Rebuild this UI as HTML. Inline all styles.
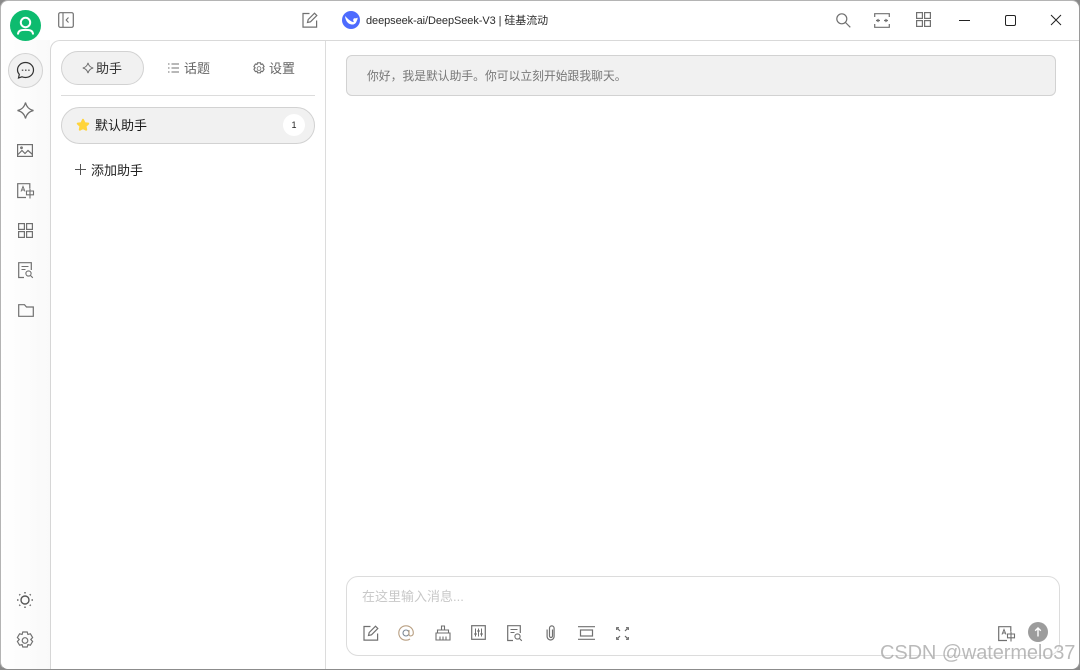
<!DOCTYPE html>
<html><head><meta charset="utf-8">
<style>
html,body{margin:0;padding:0;width:1080px;height:670px;overflow:hidden;background:#8a8a8a}
body{font-family:"Liberation Sans","Noto Sans CJK SC",sans-serif;color:#222}
.a{position:absolute}
#win{position:absolute;left:0;top:0;width:1078px;height:668px;background:linear-gradient(#fff,#fbfbfb);border:1px solid #b4b4b4;border-bottom-color:#8c8c8c;border-right-color:#9a9a9a;border-radius:8px;overflow:hidden}
#root{position:absolute;left:0;top:0;width:1080px;height:670px;overflow:hidden}
.t{position:absolute;white-space:nowrap;line-height:18px}
svg{position:absolute;overflow:visible;fill:none;stroke:#707070;stroke-width:1.2}
</style></head><body>
<div id="root">
<div id="win"></div>
<!-- left bar -->
<div class="a" style="left:1px;top:40px;width:49px;height:629px;background:linear-gradient(90deg,#fff,#f9f9f9);border-bottom-left-radius:8px"></div>
<!-- main panel -->
<div class="a" style="left:50px;top:40px;width:1029px;height:629px;background:#fff;border-left:1px solid #d6d6d6;border-top:1px solid #d9d9d9;border-top-left-radius:10px;box-sizing:border-box;border-bottom-right-radius:8px"></div>
<div class="a" style="left:325px;top:41px;width:1px;height:628px;background:#dcdcdc"></div>

<!-- avatar -->
<div class="a" style="left:10px;top:10px;width:31px;height:31px;border-radius:50%;background:#0dbb6f"></div>
<svg style="left:10px;top:10px" width="31" height="31" viewBox="0 0 31 31"><g stroke="#fff" stroke-width="2"><circle cx="15.500" cy="12.500" r="4.700"/><path d="M8 24.500c0-4 3-4.600 7.500-4.600s7.500.6 7.500 4.600"/></g></svg>

<!-- nav -->
<div class="a" style="left:8px;top:53px;border-radius:50%;background:#f1f1f1;border:1px solid #d2d2d2;box-sizing:border-box;width:35px;height:35px"></div>
<svg style="left:16px;top:61px" width="19" height="19" viewBox="0 0 19 19"><path stroke="#333" stroke-width="1.200" d="M9.500 1.500c4.500 0 8 3.200 8 7.500s-3.500 7.500-8 7.500c-1.300 0-2.500-.3-3.500-.7L2.500 17l.8-3.600C2.200 12.200 1.500 10.700 1.500 9c0-4.300 3.500-7.500 8-7.500z"/><path stroke="#333" stroke-dasharray="1.500 1.700" d="M5.800 9.200h7.800"/></svg>
<svg style="left:16px;top:101px" width="19" height="19" viewBox="0 0 19 19"><path d="M9.500 1.500C10.500 6 13 8.500 17.500 9.500 13 10.500 10.500 13 9.500 17.500 8.500 13 6 10.500 1.500 9.500 6 8.500 8.500 6 9.500 1.500z"/></svg>
<svg style="left:17px;top:144px" width="16" height="13" viewBox="0 0 16 13"><rect x=".6" y=".6" width="14.800" height="11.800"/><path d="M1 10.500l4-4 3 3 3-3 4.500 4"/><circle cx="4.500" cy="3.800" r=".8"/></svg>
<svg style="left:17px;top:183px" width="18" height="16" viewBox="0 0 18 16"><path d="M9 14.500H.7V.7h12.100v5"/><path d="M4 8.500l2-5 2 5M4.700 7h2.600" stroke-width="1"/><path d="M9.500 8h7v3.800h-7zM13 6v9.500" stroke-width="1.100"/></svg>
<svg style="left:18px;top:223px" width="15" height="15" viewBox="0 0 15 15"><rect x=".6" y=".6" width="5.800" height="5.800"/><rect x="8.600" y=".6" width="5.800" height="5.800"/><rect x=".6" y="8.600" width="5.800" height="5.800"/><rect x="8.600" y="8.600" width="5.800" height="5.800"/></svg>
<svg style="left:18px;top:262px" width="16" height="17" viewBox="0 0 16 17"><path d="M6 15.500H.7V.7h12.600V8"/><path d="M3.500 4.500h7M3.500 7.500h4" stroke-width="1"/><circle cx="10.500" cy="11.500" r="2.600" stroke-width="1.100"/><path d="M12.500 13.500l2.300 2.300" stroke-width="1.100"/></svg>
<svg style="left:18px;top:304px" width="16" height="13" viewBox="0 0 16 13"><path d="M.7 12.300V.7h5.800l2 2.300h6.800v9.300z"/></svg>
<svg style="left:16px;top:591px" width="18" height="18" viewBox="0 0 18 18"><circle cx="9" cy="9" r="4" stroke="#555" stroke-width="1.400"/><path stroke-width="1.500" stroke="#666" d="M9 1v1.500M9 15.500V17M1 9h1.500M15.500 9H17M3.300 3.300l.9.9M13.800 13.800l.9.9M3.300 14.700l.9-.9M13.800 4.200l.9-.9"/></svg>
<svg style="left:16px;top:631px" width="18" height="19" viewBox="0 0 18 19"><path d="M6.800 1h4.400l.7 2.400 2.500-.6 2.200 3.700-1.800 2 1.800 2-2.200 3.700-2.500-.6-.7 2.400H6.800l-.7-2.400-2.500.6-2.200-3.700 1.800-2-1.800-2 2.200-3.700 2.500.6z"/><circle cx="9" cy="9.500" r="2.800"/></svg>

<!-- header icons -->
<svg style="left:58px;top:12px" width="16" height="16" viewBox="0 0 16 16"><rect x=".7" y=".7" width="14.600" height="14.600" rx="1.500"/><path d="M5 1v14M10.500 5.500L8.200 8l2.300 2.500" stroke-width="1.100"/></svg>
<svg style="left:302px;top:12px" width="16" height="16" viewBox="0 0 16 16"><path d="M7.500 1.500H1v13.600h13.600V8.500"/><path d="M5.500 10.500l.7-3L12.500 1.200l2.300 2.300-6.300 6.300z" stroke-width="1.200"/></svg>
<div class="a" style="left:342px;top:11px;width:18px;height:18px;border-radius:50%;background:#4d6bfe"></div>
<svg style="left:342px;top:11px" width="18" height="18" viewBox="0 0 18 18"><path fill="#fff" stroke="none" d="M3 5c.4 4.500 2.700 8 6.500 8.500 2.600.3 4.300-1 5-3 .5-1.300 1.400-2.400 1-4-.7.600-1.400.9-2.200.8-1-.1-1.800.2-2 1-.3 1 0 2 .7 2.800-2 .1-5.200-2-9-6.100z"/></svg>
<div class="t" style="left:366px;top:12px;font-size:11px;letter-spacing:-.08px;color:#2b2b2b">deepseek-ai/DeepSeek-V3 | 硅基流动</div>
<svg style="left:836px;top:13px" width="15" height="15" viewBox="0 0 15 15"><circle cx="5.800" cy="5.800" r="5"/><path d="M9.500 9.500l4.800 4.800"/></svg>
<svg style="left:874px;top:13px" width="16" height="15" viewBox="0 0 16 15"><path d="M.7 4V.7h14.600V4M.7 11v3.300h14.600V11"/><path d="M2 7.500h4M10 7.500h4"/><path d="M4.500 6L3 7.500 4.500 9M11.500 6L13 7.500 11.500 9" stroke-width="1"/></svg>
<svg style="left:916px;top:12px" width="15" height="15" viewBox="0 0 15 15"><rect x=".6" y=".6" width="5.800" height="5.800"/><rect x="8.600" y=".6" width="5.800" height="5.800"/><rect x=".6" y="8.600" width="5.800" height="5.800"/><rect x="8.600" y="8.600" width="5.800" height="5.800"/></svg>
<div class="a" style="left:959px;top:20px;width:11px;height:1px;background:#222"></div>
<div class="a" style="left:1005px;top:15px;width:11px;height:11px;border:1px solid #222;border-radius:2px;box-sizing:border-box"></div>
<svg style="left:1051px;top:15px" width="10" height="10" viewBox="0 0 10 10"><path stroke="#222" stroke-width="1" d="M0 0l10 10M10 0L0 10"/></svg>

<!-- tabs -->
<div class="a" style="left:61px;top:51px;width:83px;height:34px;background:#f1f1f1;border:1px solid #d2d2d2;border-radius:17px;box-sizing:border-box"></div>
<svg style="left:82px;top:62px" width="12" height="12" viewBox="0 0 12 12"><path stroke-width="1" d="M6 .8C6.600 3.500 8.300 5.300 11.200 6 8.300 6.700 6.600 8.500 6 11.200 5.400 8.500 3.700 6.700.8 6 3.700 5.300 5.400 3.500 6 .8z"/></svg>
<div class="t" style="left:96px;top:60px;font-size:13px;color:#333">助手</div>
<svg style="left:168px;top:63px" width="11" height="10" viewBox="0 0 11 10"><path stroke-width="1" d="M0 1h1.500M3.500 1H11M0 5h1.500M3.500 5H11M0 9h1.500M3.500 9H11"/></svg>
<div class="t" style="left:184px;top:60px;font-size:13px;color:#666">话题</div>
<svg style="left:253px;top:62px" width="12" height="13" viewBox="0 0 18 19"><path stroke-width="1.700" d="M6.800 1h4.400l.7 2.400 2.500-.6 2.200 3.700-1.800 2 1.800 2-2.200 3.700-2.500-.6-.7 2.400H6.800l-.7-2.400-2.500.6-2.200-3.700 1.800-2-1.800-2 2.200-3.700 2.500.6z"/><circle cx="9" cy="9.500" r="2.800"/></svg>
<div class="t" style="left:269px;top:60px;font-size:13px;color:#666">设置</div>
<div class="a" style="left:61px;top:95px;width:254px;height:1px;background:#dcdcdc"></div>

<!-- assistant -->
<div class="a" style="left:61px;top:107px;width:254px;height:37px;background:#f1f1f1;border:1px solid #d2d2d2;border-radius:18.500px;box-sizing:border-box"></div>
<svg style="left:76px;top:118px" width="14" height="14" viewBox="0 0 14 14"><path fill="#ffd43b" stroke="#ffd43b" stroke-width="2" stroke-linejoin="round" d="M7 1.800l1.600 3.400 3.600.4-2.700 2.500.7 3.600L7 10l-3.200 1.700.7-3.600L1.800 5.600l3.600-.4z"/></svg>
<div class="t" style="left:95px;top:117px;font-size:13px;color:#1a1a1a">默认助手</div>
<div class="a" style="left:283px;top:114px;width:22px;height:22px;border-radius:50%;background:#fff;font-size:9px;line-height:22px;text-align:center;color:#222">1</div>
<svg style="left:75px;top:164px" width="11" height="11" viewBox="0 0 11 11"><path stroke="#555" stroke-width="1" d="M5.500 0v11M0 5.500h11"/></svg>
<div class="t" style="left:91px;top:162px;font-size:13px;color:#222">添加助手</div>

<!-- message -->
<div class="a" style="left:346px;top:55px;width:710px;height:41px;background:#f1f1f1;border:1px solid #d2d2d2;border-radius:6px;box-sizing:border-box"></div>
<div class="t" style="left:367px;top:67px;font-size:11.800px;color:#777">你好，我是默认助手。你可以立刻开始跟我聊天。</div>

<!-- input -->
<div class="a" style="left:346px;top:576px;width:714px;height:80px;background:#fff;border:1px solid #dcdcdc;border-radius:12px;box-sizing:border-box"></div>
<div class="t" style="left:362px;top:588px;font-size:13px;color:#c8c8c8">在这里输入消息...</div>
<svg style="left:363px;top:625px" width="16" height="16" viewBox="0 0 16 16"><path d="M7.500 1.500H1v13.600h13.600V8.500"/><path d="M5.500 10.500l.7-3L12.500 1.200l2.300 2.300-6.300 6.300z"/></svg>
<svg style="left:398px;top:625px" width="16" height="16" viewBox="0 0 16 16"><circle cx="8" cy="8" r="3" stroke-width="1.100" stroke="#7a8794"/><path stroke="#b9a083" stroke-width="1.100" d="M11 5v4.500c0 2.300 4.300 1.800 4.300-1.500C15.300 3.800 12 .8 8 .8S.8 3.800.8 8 4 15.200 8 15.200c1.600 0 2.900-.4 4-1.200"/></svg>
<svg style="left:435px;top:625px" width="16" height="16" viewBox="0 0 16 16"><path d="M6.500 5V1h3v4M2.500 5h11v3h-11zM1 15V8h14v7zM5 15v-3.500M8 15v-3.500M11 15v-3.500" stroke-width="1.100"/></svg>
<svg style="left:471px;top:625px" width="15" height="15" viewBox="0 0 15 15"><rect x=".7" y=".7" width="13.600" height="13.600"/><path stroke-width="1" d="M4.500 3.500v8M10.500 3.500v8M7.500 3.500v8"/><path stroke-width="1.600" d="M3.300 9h2.400M9.300 9h2.400M6.300 6h2.400"/></svg>
<svg style="left:507px;top:625px" width="16" height="17" viewBox="0 0 16 17"><path d="M6 15.500H.7V.7h12.600V8"/><path d="M3.500 4.500h7M3.500 7.500h4" stroke-width="1"/><circle cx="10.500" cy="11.500" r="2.600" stroke-width="1.100"/><path d="M12.500 13.500l2.300 2.300" stroke-width="1.100"/></svg>
<svg style="left:546px;top:625px" width="10" height="16" viewBox="0 0 10 16"><path stroke-width="1.200" d="M6.500 4.500V11a1.500 1.500 0 0 1-3 0V3.200a2.300 2.300 0 0 1 4.600 0V11.500a3.500 3.500 0 0 1-7 0V4.500"/></svg>
<svg style="left:578px;top:626px" width="17" height="14" viewBox="0 0 17 14"><path d="M0 .7h17M0 13.300h17"/><rect x="2.500" y="4" width="12" height="6"/></svg>
<svg style="left:616px;top:627px" width="13" height="13" viewBox="0 0 13 13"><path stroke="#666" stroke-width="1.200" d="M1.500 1.500l2.500 2.500M11.500 1.500L9 4M1.500 11.500L4 9M11.500 11.500L9 9"/><path stroke="#666" stroke-width="1.200" d="M.7 3V.7H3M10 .7h2.300V3M.7 10v2.300H3M10 12.300h2.300V10"/></svg>
<svg style="left:998px;top:626px" width="18" height="16" viewBox="0 0 18 16"><path d="M9 14.500H.7V.7h12.100v5"/><path d="M4 8.500l2-5 2 5M4.700 7h2.600" stroke-width="1"/><path d="M9.500 8h7v3.800h-7zM13 6v9.500" stroke-width="1.100"/></svg>
<div class="a" style="left:1028px;top:622px;width:20px;height:20px;border-radius:50%;background:#9c9c9c"></div>
<svg style="left:1028px;top:622px" width="20" height="20" viewBox="0 0 20 20"><path stroke="#fff" stroke-width="1.400" d="M10 14.500V6M7.200 8.800L10 6l2.800 2.800"/></svg>

<!-- watermark -->
<div class="t" style="left:880px;top:642px;font-size:20px;letter-spacing:-.1px;line-height:22px;color:rgba(130,130,130,.55);text-shadow:0 0 2px rgba(255,255,255,.9)">CSDN @watermelo37</div>
</div>
</body></html>
